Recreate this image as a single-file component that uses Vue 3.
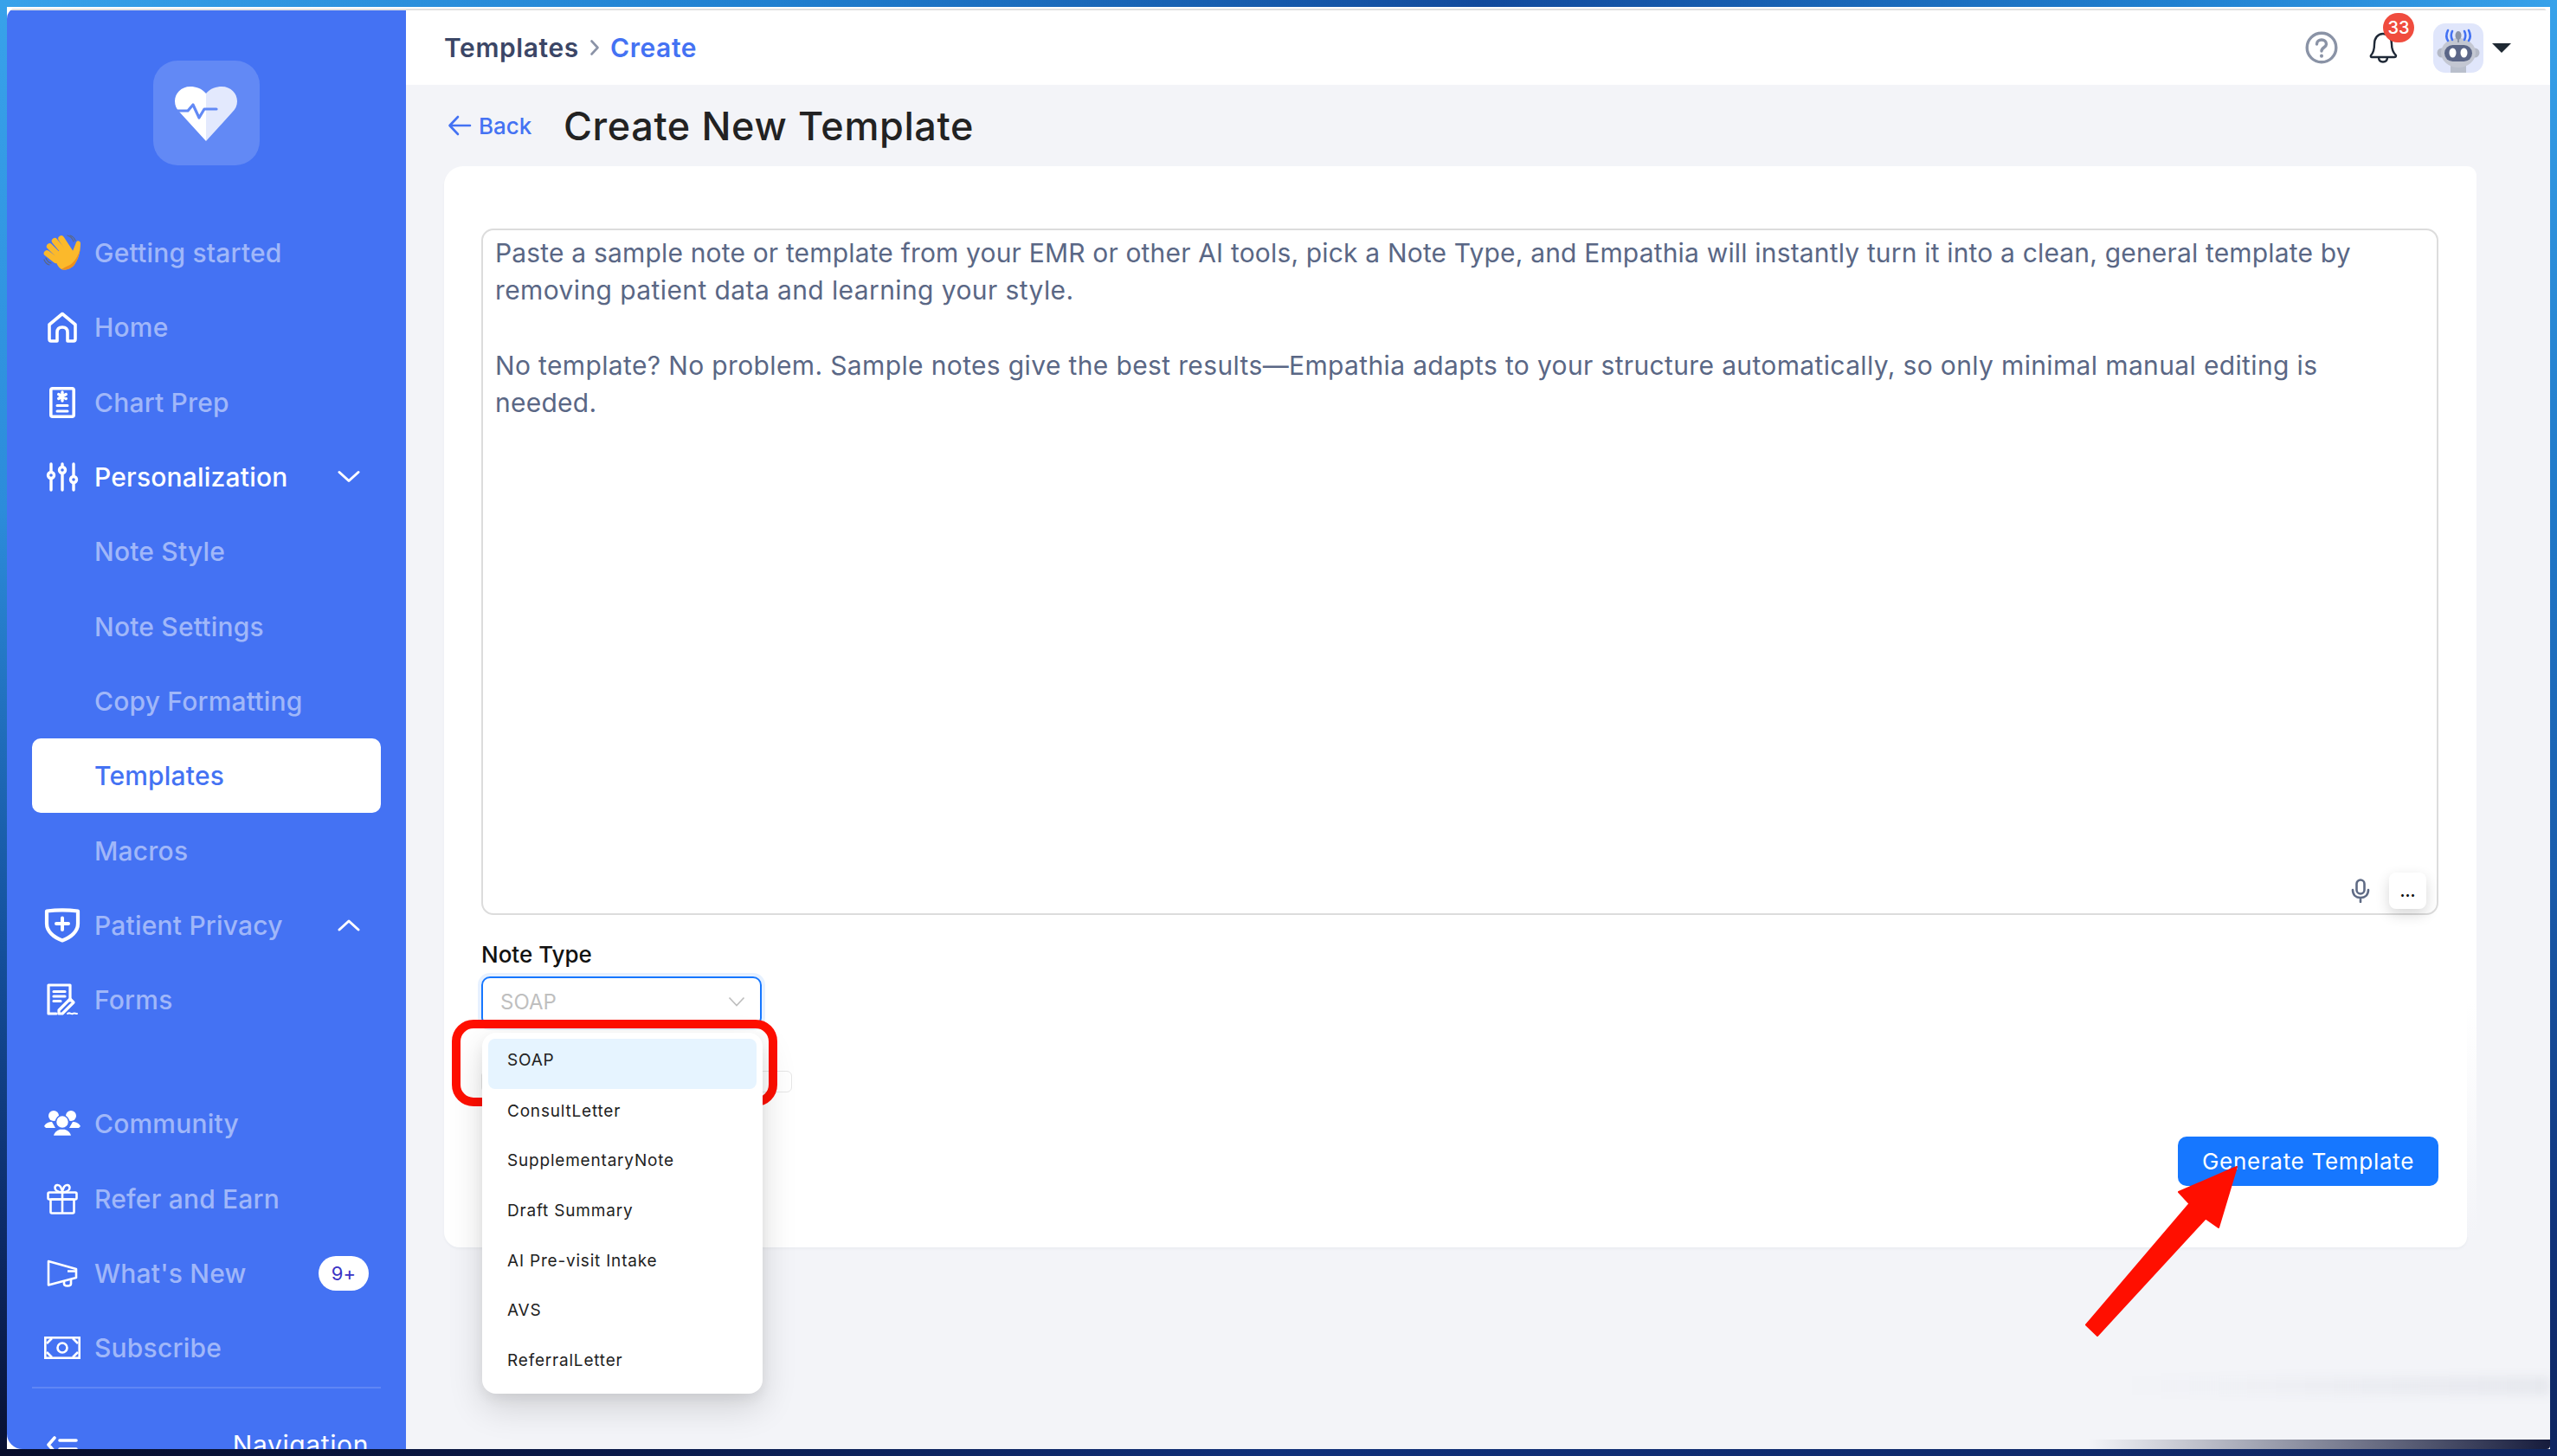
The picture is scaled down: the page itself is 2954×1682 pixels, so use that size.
<script setup>
const promptLines = [
  { text: 'Paste a sample note or template from your EMR or other AI tools, pick a Note Type, and Empathia will instantly turn it into a clean, general template by', spacing: 0.17 },
  { text: 'removing patient data and learning your style.', spacing: 0.4 },
  { text: '\u00a0', spacing: 0 },
  { text: 'No template? No problem. Sample notes give the best results—Empathia adapts to your structure automatically, so only minimal manual editing is', spacing: 0.36 },
  { text: 'needed.', spacing: 0.25 }
]
const options = ['SOAP', 'ConsultLetter', 'SupplementaryNote', 'Draft Summary', 'AI Pre-visit Intake', 'AVS', 'ReferralLetter']
</script>

<template>
  <div class="screen">
    <div class="window">
      <div class="top-line"></div>
      <div class="shell">
        <aside class="sidebar">
          <div class="logo">
            <svg width="123" height="121" viewBox="0 0 123 121">
              <path d="M61 38C56 32 49 30 43 30C32 30 25 38 25 47C25 52 27 56 30 59L61 93Z" fill="#fff" />
              <path d="M61 38C66 32 73 30 79 30C90 30 97 38 97 47C97 52 95 56 91 60L61 93Z" fill="#e3e9fd" />
              <path d="M28 58H40L46 51L53 66L59 56H73" fill="none" stroke="#6289f5" stroke-width="3.2" stroke-linejoin="round" stroke-linecap="round" />
            </svg>
          </div>
          <nav class="nav">
            <div class="row">
              <span class="ico">
                <svg width="46" height="44" viewBox="0 0 46 44">
                  <g fill="none" stroke="#5b6780" stroke-width="1.2" stroke-linecap="round">
                    <path d="M32 2C35 3 37 5 38 8M29 2C32 3 35 6 36 9" />
                    <path d="M2 30C3 33 5 35 8 36M4 28C5 31 7 33 10 34" />
                  </g>
                  <g fill="#fbb92b">
                    <rect x="11" y="9" width="7" height="25" rx="3.5" transform="rotate(-45 14 21)" />
                    <rect x="17" y="3" width="7" height="26" rx="3.5" transform="rotate(-40 20 16)" />
                    <rect x="23" y="1" width="7" height="25" rx="3.5" transform="rotate(-33 26 13)" />
                    <rect x="7" y="17" width="7" height="20" rx="3.5" transform="rotate(-52 10 27)" />
                    <path d="M14 24L28 13L35 20L39 10C40 7 44 8 44 11C44 19 42 28 38 34C35 40 27 43 22 41C18 39 15 33 14 24Z" />
                  </g>
                  <path d="M22 41C27 43 35 40 38 34C41 29 43 23 44 16C42 24 38 32 32 36C28 38 25 39 22 41Z" fill="#ee8f1d" />
                </svg>
              </span>
              <span>Getting started</span>
            </div>
            <div class="row">
              <span class="ico">
                <svg width="36" height="36" viewBox="0 0 36 36" fill="none" stroke="#fff" stroke-width="3.600" stroke-linejoin="round">
                  <path d="M18 2.500L3 15V31.500C3 33 4 34 5 34H12V24C12 20 14 18 18 18C22 18 24 20 24 24V34H31C32 34 33 33 33 31.500V15Z" />
                </svg>
              </span>
              <span>Home</span>
            </div>
            <div class="row">
              <span class="ico">
                <svg width="30" height="36" viewBox="0 0 30 36">
                  <rect x="1.800" y="1.800" width="26.400" height="32.400" rx="2" fill="none" stroke="#fff" stroke-width="3.600" />
                  <path d="M15 6V16M10.700 8.500L19.300 13.500M19.300 8.500L10.700 13.500" stroke="#fff" stroke-width="3.400" stroke-linecap="round" />
                  <path d="M9 21.500H21M9 28H21" stroke="#fff" stroke-width="3" stroke-linecap="round" />
                </svg>
              </span>
              <span>Chart Prep</span>
            </div>
            <div class="row strong">
              <span class="ico">
                <svg width="38" height="34" viewBox="0 0 38 34" fill="none" stroke="#fff" stroke-width="3.400" stroke-linecap="round">
                  <path d="M6 2V11M6 19V32M19 2V5M19 13V32M32 2V16M32 24V32" />
                  <circle cx="6" cy="15" r="3.500" />
                  <circle cx="19" cy="9" r="3.500" />
                  <circle cx="32" cy="20" r="3.500" />
                </svg>
              </span>
              <span>Personalization</span>
              <svg class="chev" width="26" height="16" viewBox="0 0 26 16" fill="none" stroke="#fff" stroke-width="3" stroke-linecap="round" stroke-linejoin="round"><path d="M2 2.500L13 12.500L24 2.500" /></svg>
            </div>
            <div class="row"><span class="ico"></span><span>Note Style</span></div>
            <div class="row"><span class="ico"></span><span>Note Settings</span></div>
            <div class="row"><span class="ico"></span><span>Copy Formatting</span></div>
            <div class="row active"><span class="ico"></span><span>Templates</span></div>
            <div class="row"><span class="ico"></span><span>Macros</span></div>
            <div class="row">
              <span class="ico">
                <svg width="42" height="40" viewBox="0 0 42 40" fill="none" stroke="#fff">
                  <path d="M3 3.500C15 2 27 2 39 3.500V18C39 27 31 34 21 37.500C11 34 3 27 3 18Z" stroke-width="4.200" stroke-linejoin="round" />
                  <path d="M21 11.500V25M14 18H28" stroke-width="4" stroke-linecap="round" />
                </svg>
              </span>
              <span>Patient Privacy</span>
              <svg class="chev" width="26" height="16" viewBox="0 0 26 16" fill="none" stroke="#fff" stroke-width="3" stroke-linecap="round" stroke-linejoin="round"><path d="M2 13L13 3L24 13" /></svg>
            </div>
            <div class="row">
              <span class="ico">
                <svg width="36" height="38" viewBox="0 0 36 38" fill="none" stroke="#fff" stroke-width="3.200" stroke-linecap="round" stroke-linejoin="round">
                  <path d="M27 20V2H2V35H11" />
                  <path d="M8 9.500H21M8 15H21M8 20.500H16" />
                  <path d="M14 31L27 18L31 22L18 35H14Z" />
                  <path d="M24 35C27 33 28 36 30 35C32 34 33 35 35 35" stroke-width="2" />
                </svg>
              </span>
              <span>Forms</span>
            </div>
            <div class="spacer"></div>
            <div class="row">
              <span class="ico">
                <svg width="42" height="32" viewBox="0 0 42 32" fill="#fff">
                  <circle cx="11" cy="7" r="6" />
                  <circle cx="31" cy="7" r="6" />
                  <path d="M0 19C2 15 6 14 9 14L13 21H2ZM42 19C40 15 36 14 33 14L29 21H40Z" />
                  <circle cx="21" cy="14" r="7.500" stroke="#4472f3" stroke-width="1.500" />
                  <path d="M10 30.500C11 25 15 23 18 22H24C27 23 31 25 32 30.500Z" stroke="#4472f3" stroke-width="1.500" />
                </svg>
              </span>
              <span>Community</span>
            </div>
            <div class="row">
              <span class="ico">
                <svg width="36" height="36" viewBox="0 0 36 36" fill="none" stroke="#fff" stroke-width="2.600" stroke-linejoin="round">
                  <rect x="1.500" y="10.500" width="33" height="8" rx="1.500" />
                  <rect x="4.500" y="18.500" width="27" height="16" rx="1.500" />
                  <path d="M18 10.500V34.500" />
                  <path d="M18 10.500C14 10 9 9 9.500 4.500C10 1.500 14 1 16 4C17 6 18 8 18 10.500C18 8 19 6 20 4C22 1 26 1.500 26.500 4.500C27 9 22 10 18 10.500Z" />
                </svg>
              </span>
              <span>Refer and Earn</span>
            </div>
            <div class="row">
              <span class="ico">
                <svg width="36" height="32" viewBox="0 0 36 32" fill="none" stroke="#fff" stroke-width="2.600" stroke-linejoin="round">
                  <path d="M2 2L34 11V21L2 29.500Z" />
                  <path d="M24 13.500H34M20 25V28C20 30 22 30.500 24 30.500C26 30.500 28 30 28 28V23" />
                </svg>
              </span>
              <span>What's New</span>
              <span class="count">9+</span>
            </div>
            <div class="row">
              <span class="ico">
                <svg width="42" height="26" viewBox="0 0 42 26" fill="none" stroke="#fff" stroke-width="2.600">
                  <rect x="1.300" y="1.300" width="39.400" height="23.400" />
                  <circle cx="21" cy="13" r="5.500" />
                  <path d="M9 2L3 8M33 2L39 8M9 24L3 18M33 24L39 18" />
                </svg>
              </span>
              <span>Subscribe</span>
            </div>
            <div class="divider"></div>
            <div class="row collapse">
              <span class="ico">
                <svg width="36" height="20" viewBox="0 0 36 20" fill="none" stroke="#fff" stroke-width="3.600" stroke-linecap="round" stroke-linejoin="round">
                  <path d="M9 2L2 10L9 18M15 5H34M15 15H34" />
                </svg>
              </span>
              <span class="nav-label">Navigation</span>
            </div>
          </nav>
        </aside>

        <main class="main">
          <header class="header">
            <div class="crumbs">
              <span class="crumb-a">Templates</span>
              <svg width="12" height="20" viewBox="0 0 12 20" fill="none" stroke="#8b93a7" stroke-width="2.600" stroke-linecap="round" stroke-linejoin="round"><path d="M2.500 2.500L9.500 10L2.500 17.500" /></svg>
              <span class="crumb-b">Create</span>
            </div>
            <div class="tools">
              <svg class="help" width="38" height="38" viewBox="0 0 38 38" fill="none" stroke="#8a93a6" stroke-width="3.400" stroke-linecap="round">
                <circle cx="19" cy="19" r="16.800" />
                <path d="M13.500 15C13.500 12 16 10 19 10C22 10 24.500 12 24.500 15C24.500 19 19 18.500 19 23" />
                <path d="M19 28.500V28.700" stroke-width="4" />
              </svg>
              <div class="bell">
                <svg width="36" height="38" viewBox="0 0 36 38" fill="none" stroke="#1f2937" stroke-width="2.400" stroke-linejoin="round">
                  <path d="M4 28C7 25 8 21 8 15C8 8 12 3 18 3C24 3 28 8 28 15C28 21 30 25 33 28C33 29.500 32 30 31 30H5C4 30 3.500 29 4 28Z" />
                  <path d="M13 30C13 34 15 35.500 18 35.500C21 35.500 23 34 23 30" />
                </svg>
                <span class="badge">33</span>
              </div>
              <div class="avatar">
                <svg width="58" height="57" viewBox="0 0 58 57">
                  <path d="M20 47H38V57H20Z" fill="#b9bfcc" />
                  <circle cx="10" cy="34" r="5.500" fill="#b4b9c6" />
                  <circle cx="48" cy="34" r="5.500" fill="#b4b9c6" />
                  <ellipse cx="29" cy="34" rx="20" ry="17" fill="#c3c7d2" />
                  <rect x="13" y="25" width="32" height="19" rx="9.500" fill="#5b6687" />
                  <ellipse cx="22.500" cy="34" rx="4" ry="5.500" fill="#fff" />
                  <ellipse cx="35.500" cy="34" rx="4" ry="5.500" fill="#fff" />
                  <ellipse cx="29" cy="14" rx="3.500" ry="5" fill="#8a93a6" />
                  <path d="M29 18V22" stroke="#8a93a6" stroke-width="2" />
                  <g fill="none" stroke="#4472f3" stroke-width="2.600" stroke-linecap="round">
                    <path d="M22 9C20.500 12 20.500 16 22 19M17 8C15 12 15 17 17 20M36 9C37.500 12 37.500 16 36 19M41 8C43 12 43 17 41 20" />
                  </g>
                </svg>
              </div>
              <span class="caret"></span>
            </div>
          </header>

          <section class="content">
            <div class="title-row">
              <div class="back">
                <svg width="28" height="26" viewBox="0 0 28 26" fill="none" stroke="#4472f3" stroke-width="2.600" stroke-linecap="round" stroke-linejoin="round"><path d="M12 3L2.500 13L12 23M3 13H26" /></svg>
                <span>Back</span>
              </div>
              <h1>Create New Template</h1>
            </div>

            <div class="card">
              <div class="textarea">
                <div class="prompt">
                  <div v-for="(line, i) in promptLines" :key="i" :style="{ letterSpacing: line.spacing + 'px' }">{{ line.text }}</div>
                </div>
                <div class="area-tools">
                  <svg width="22" height="28" viewBox="0 0 22 28" fill="none" stroke="#5f6b85" stroke-width="2.600" stroke-linecap="round">
                    <rect x="6.500" y="1.500" width="9" height="16" rx="4.500" />
                    <path d="M2 13C2 19 6 22 11 22C16 22 20 19 20 13M11 22V27" />
                  </svg>
                  <div class="more">...</div>
                </div>
              </div>

              <div class="field-label">Note Type</div>
              <div class="select">
                <span class="placeholder">SOAP</span>
                <svg width="20" height="12" viewBox="0 0 20 12" fill="none" stroke="#bfbfbf" stroke-width="1.800"><path d="M1.500 1.500L10 10.500L18.500 1.500" /></svg>
                <div class="dropdown">
                  <div v-for="(o, i) in options" :key="o" class="option" :class="{ picked: i === 0 }">{{ o }}</div>
                </div>
              </div>
              <div class="ghost-field"></div>
              <div class="actions"><button class="generate">Generate Template</button></div>
            </div>
          </section>
        </main>
      </div>
      <div class="shade-band"></div>
      <div class="shade-bottom"></div>
    </div>

    <svg class="annot" width="2954" height="1682" viewBox="0 0 2954 1682">
      <rect x="527" y="1183" width="366" height="90" rx="20" fill="none" stroke="#ff0f00" stroke-width="10" />
      <path d="M2584 1348L2517 1377L2529.500 1390.500L2410 1530.500L2423 1543L2548 1407.500L2563 1418Z" fill="#ff0f00" stroke="#ff0f00" stroke-width="2" stroke-linejoin="round" />
    </svg>
  </div>
</template>

<style scoped>
.screen {
  position: relative;
  width: 2954px;
  height: 1682px;
  padding: 8px;
  box-sizing: border-box;
  overflow: hidden;
  font-family: Inter, "Liberation Sans", sans-serif;
  background:
    linear-gradient(90deg, #38a2ea 0, #2080d0 30%, #124a9c 58%, #2080d0 85%, #38a2ea 100%) top / 100% 8px no-repeat,
    linear-gradient(90deg, #070d2a 0, #0a1a4a 25%, #10307a 50%, #0e2560 100%) bottom / 100% 8px no-repeat,
    linear-gradient(180deg, #38a2ea 0, #2c8cda 35%, #14509c 65%, #0c2a66 85%, #081030 100%) left / 8px 100% no-repeat,
    linear-gradient(180deg, #38a2ea 0, #2078c8 35%, #1a5cac 60%, #10327a 85%, #0e2560 100%) right / 8px 100% no-repeat;
}
.window {
  position: relative;
  width: 2938px;
  height: 1666px;
  border-radius: 14px 14px 4px 18px;
  overflow: hidden;
  background: #fff;
  display: flex;
  flex-direction: column;
}
.top-line {
  flex: none;
  height: 2px;
  margin-top: 2px;
  background: #e0e0e0;
}
.shell {
  flex: 1;
  min-height: 0;
  display: flex;
}
.sidebar {
  flex: none;
  width: 461px;
  background: #4472f3;
  overflow: hidden;
  color: #a0b7f9;
}
.logo {
  width: 123px;
  height: 121px;
  margin: 58px 0 0 169px;
  background: #6289f5;
  border-radius: 28px;
}
.nav {
  margin-top: 58px;
  display: flex;
  flex-direction: column;
}
.row {
  flex: none;
  height: 86.300px;
  margin: 0 29px;
  padding: 0 24px 0 6px;
  display: flex;
  align-items: center;
  font-size: 30px;
  font-weight: 500;
  letter-spacing: 0.2px;
  border-radius: 10px;
  box-sizing: border-box;
}
.ico {
  flex: none;
  width: 58px;
  margin-right: 8px;
  display: flex;
  align-items: center;
  justify-content: center;
}
.strong {
  color: #fff;
}
.active {
  background: #fff;
  color: #4472f3;
}
.chev {
  margin-left: auto;
}
.count {
  margin-left: auto;
  margin-right: -10px;
  width: 58px;
  height: 40px;
  border-radius: 20px;
  background: #fff;
  color: #3a33c4;
  font-size: 22px;
  font-weight: 400;
  display: flex;
  align-items: center;
  justify-content: center;
}
.spacer {
  flex: none;
  height: 57px;
}
.divider {
  flex: none;
  height: 2px;
  margin: 2px 29px 0;
  background: #5f86f5;
}
.collapse {
  margin-top: 21px;
  color: #fff;
  font-weight: 400;
}
.nav-label {
  margin-left: auto;
  margin-right: -10px;
  letter-spacing: 0.6px;
}
.main {
  flex: 1;
  min-width: 0;
  background: #f3f4f8;
  display: flex;
  flex-direction: column;
}
.header {
  flex: none;
  height: 86px;
  box-sizing: border-box;
  padding: 0 0 0 44px;
  background: #fff;
  display: flex;
  align-items: center;
}
.crumbs {
  display: flex;
  align-items: center;
  gap: 12px;
  font-size: 30px;
  font-weight: 600;
  letter-spacing: 0.6px;
}
.crumb-a {
  color: #3b4666;
}
.crumb-b {
  color: #4472f3;
}
.tools {
  margin-left: auto;
  display: flex;
  align-items: center;
  height: 100%;
}
.help {
  margin-right: 34px;
}
.bell {
  position: relative;
  width: 36px;
  height: 38px;
  margin-right: 40px;
}
.badge {
  position: absolute;
  left: 18px;
  top: -21px;
  width: 36px;
  height: 34px;
  border-radius: 17px;
  background: #f04c3e;
  color: #fff;
  font-size: 20px;
  font-weight: 500;
  display: flex;
  align-items: center;
  justify-content: center;
}
.avatar {
  width: 58px;
  height: 57px;
  border-radius: 14px;
  background: #e0e6fb;
  overflow: hidden;
}
.caret {
  margin: 0 45px 0 10px;
  width: 0;
  height: 0;
  border-left: 11px solid transparent;
  border-right: 11px solid transparent;
  border-top: 11px solid #1f2933;
}
.content {
  flex: 1;
  min-height: 0;
  padding: 0 96px 0 44px;
}
.title-row {
  height: 94px;
  display: flex;
  align-items: center;
}
.back {
  width: 138px;
  display: flex;
  align-items: center;
  gap: 8px;
  padding-left: 4px;
  box-sizing: border-box;
  color: #4472f3;
  font-size: 26px;
  font-weight: 500;
}
h1 {
  margin: 0;
  font-size: 45px;
  font-weight: 500;
  letter-spacing: 0.6px;
  color: #222;
}
.card {
  position: relative;
  height: 1249px;
  box-sizing: border-box;
  padding: 72px 33px 0 43px;
  background: #fff;
  border-radius: 22px 0 12px 18px;
  box-shadow: 0 2px 3px rgba(30, 40, 80, 0.04);
}
.card::after {
  content: "";
  position: absolute;
  top: 0;
  right: -11px;
  bottom: 12px;
  width: 11px;
  border-radius: 0 22px 0 0;
  background: linear-gradient(180deg, #fff 78%, #f3f4f8 100%);
}
.textarea {
  position: relative;
  height: 793px;
  box-sizing: border-box;
  border: 2px solid #dcdcdc;
  border-radius: 14px;
  padding: 5px 14px;
}
.prompt {
  white-space: pre;
  font-size: 30px;
  line-height: 43.300px;
  color: #5a6785;
}
.area-tools {
  position: absolute;
  right: 12px;
  bottom: 5px;
  display: flex;
  align-items: center;
  gap: 22px;
}
.more {
  width: 43px;
  height: 42px;
  border-radius: 8px;
  background: #fff;
  box-shadow: 0 6px 16px rgba(0, 0, 0, 0.16);
  color: #111;
  font-size: 18px;
  font-weight: 700;
  display: flex;
  align-items: center;
  justify-content: center;
}
.field-label {
  margin-top: 31px;
  height: 30px;
  line-height: 30px;
  font-size: 26px;
  font-weight: 500;
  color: #111;
}
.select {
  position: relative;
  margin-top: 10px;
  width: 324px;
  height: 58px;
  box-sizing: border-box;
  padding: 0 17px 0 20px;
  border: 2px solid #1677ff;
  border-radius: 10px;
  box-shadow: 0 0 0 4px rgba(22, 119, 255, 0.1);
  display: flex;
  align-items: center;
  justify-content: space-between;
}
.placeholder {
  font-size: 24px;
  color: #bfbfbf;
}
.dropdown {
  position: absolute;
  left: -1px;
  top: 63px;
  width: 324px;
  height: 417px;
  box-sizing: border-box;
  padding: 7px;
  background: #fff;
  border-radius: 16px;
  box-shadow: 0 16px 40px rgba(0, 0, 0, 0.14), 0 6px 14px rgba(0, 0, 0, 0.06);
  z-index: 2;
}
.option {
  height: 57.600px;
  box-sizing: border-box;
  padding: 0 22px 6px;
  display: flex;
  align-items: center;
  border-radius: 8px;
  font-size: 19px;
  letter-spacing: 0.8px;
  color: #222;
}
.picked {
  background: #e6f4ff;
  padding-bottom: 8px;
}
.ghost-field {
  margin-top: 51px;
  width: 359px;
  height: 25px;
  box-sizing: border-box;
  border: 1px solid #e6e6e6;
  border-radius: 6px;
}
.actions {
  margin-top: 51px;
  display: flex;
  justify-content: flex-end;
}
.generate {
  width: 301px;
  height: 57px;
  border: none;
  border-radius: 10px;
  background: #1677ff;
  color: #fff;
  font-family: inherit;
  font-size: 26px;
  font-weight: 400;
  letter-spacing: 0.7px;
  padding: 0;
}
.shade-band {
  position: absolute;
  right: 0;
  bottom: 62px;
  width: 500px;
  height: 22px;
  background: linear-gradient(90deg, transparent, rgba(40, 50, 80, 0.06));
  filter: blur(6px);
}
.shade-bottom {
  position: absolute;
  right: 0;
  bottom: 0;
  width: 534px;
  height: 11px;
  background: linear-gradient(90deg, rgba(10, 16, 50, 0), rgba(10, 16, 50, 0.95));
}
.annot {
  position: absolute;
  left: 0;
  top: 0;
  pointer-events: none;
}
</style>
